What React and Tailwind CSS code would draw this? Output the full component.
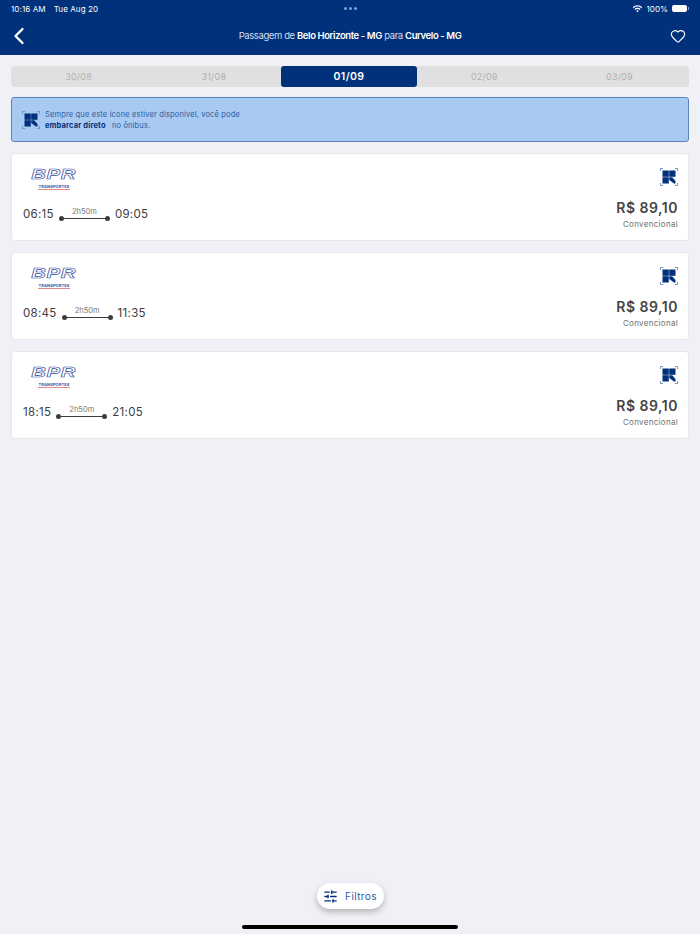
import React from 'react';
import { ChevronLeft, Heart, SlidersHorizontal } from 'lucide-react';

const dates = ['30/08', '31/08', '01/09', '02/09', '03/09'];

const trips = [
  { from: '06:15', to: '09:05' },
  { from: '08:45', to: '11:35' },
  { from: '18:15', to: '21:05' },
];

// icone de embarque direto
const BoardIcon = ({ className }) => (
  <svg viewBox="0 0 18 18" className={className}>
    <g fill="none" stroke="#6f94c8" strokeWidth="1">
      <path d="M.5 3V.5H3M15 .5h2.500V3M.5 15v2.500H3M15 17.500h2.500V15" />
    </g>
    <g fill="#00317a">
      <rect x="2.500" y="2.500" width="6.300" height="6.300" />
      <rect x="9.200" y="2.500" width="6.300" height="6.300" />
      <rect x="2.500" y="9.200" width="6.300" height="6.300" />
      <path d="M9.200 9.200h3l3.300 3.800v2.500h-1.500l-4.800-3.500z" />
    </g>
  </svg>
);

const Logo = () => (
  <div className="flex w-[46px] flex-col items-center">
    <span className="scale-x-[1.35] text-[15px] leading-[16px] font-bold italic tracking-[0.5px] text-transparent [-webkit-text-stroke:0.6px_#2f479c] font-['Liberation_Sans',sans-serif]">
      BPR
    </span>
    <span className="mt-[2px] border-b border-[#e08a86] text-[4px] leading-[5px] font-bold tracking-[0.1px] text-[#3f56a8]">
      TRANSPORTES
    </span>
  </div>
);

const TripCard = ({ from, to }) => (
  <div className="flex h-[88px] items-start justify-between rounded-[3px] border border-[#e6e7ea] bg-white pl-[11px] pr-[10px]">
    <div>
      <div className="mt-[12px] ml-[8px]">
        <Logo />
      </div>
      <div className="mt-[16px] flex items-center gap-[5px] text-[11.5px] leading-[16px] tracking-[0.3px] text-[#3c3c3c]">
        <span>{from}</span>
        <div className="flex flex-col">
          <span className="text-center text-[7.5px] leading-[9px] tracking-normal text-[#777]">2h50m</span>
          <div className="flex items-center">
            <div className="h-[5px] w-[5px] rounded-full bg-[#3c3c3c]"></div>
            <div className="h-px w-[41px] bg-[#3c3c3c]"></div>
            <div className="h-[5px] w-[5px] rounded-full bg-[#3c3c3c]"></div>
          </div>
        </div>
        <span>{to}</span>
      </div>
    </div>
    <div className="flex flex-col items-end">
      <BoardIcon className="mt-[14px] h-[18px] w-[18px]" />
      <span className="mt-[13px] text-[14px] leading-[18px] font-semibold tracking-[0.5px] text-[#444]">R$ 89,10</span>
      <span className="mt-[1px] text-[8px] leading-[12px] tracking-[0.3px] text-[#707070]">Convencional</span>
    </div>
  </div>
);

export default function App() {
  return (
    <div className="flex h-[934px] w-[700px] flex-col overflow-hidden bg-[#f0f1f6] font-['Inter',sans-serif]">
      {/* HEADER */}
      <header className="h-[55px] shrink-0 bg-[#00317a] text-white">
        <div className="flex h-[17px] items-center justify-between px-[11px] text-[8px] tracking-[0.1px]">
          <div className="flex w-[200px] gap-[8px]">
            <span>10:16 AM</span>
            <span>Tue Aug 20</span>
          </div>
          <div className="flex gap-[2px]">
            <div className="h-[3px] w-[3px] rounded-full bg-[#7fa3d8]"></div>
            <div className="h-[3px] w-[3px] rounded-full bg-[#7fa3d8]"></div>
            <div className="h-[3px] w-[3px] rounded-full bg-[#7fa3d8]"></div>
          </div>
          <div className="flex w-[200px] items-center justify-end gap-[3px]">
            <svg viewBox="0 0 16 12" className="h-[8px] w-[11px]" fill="white">
              <path d="M8 2.400c2.300 0 4.400.9 5.900 2.400l1.200-1.300C13.300 1.600 10.800.5 8 .5S2.700 1.600.9 3.500l1.200 1.300C3.600 3.300 5.700 2.400 8 2.400z" />
              <path d="M8 6c1.300 0 2.500.5 3.400 1.400l1.200-1.300C11.400 4.900 9.800 4.200 8 4.200s-3.400.7-4.600 1.900l1.200 1.300C5.500 6.500 6.700 6 8 6z" />
              <path d="M8 7.800c-.8 0-1.500.3-2 .8L8 11l2-2.400c-.5-.5-1.200-.8-2-.8z" />
            </svg>
            <span className="mr-[1px]">100%</span>
            <div className="flex items-center">
              <div className="h-[7px] w-[15px] rounded-[2px] bg-white"></div>
              <div className="ml-px h-[3px] w-px bg-[#7fa3d8]"></div>
            </div>
          </div>
        </div>
        <div className="flex h-[38px] items-center justify-between pl-[5px] pr-[14px]">
          <div className="w-[53px]">
            <ChevronLeft size={28} strokeWidth={2} className="text-white" />
          </div>
          <span className="text-[9.5px] tracking-[-0.4px] text-[#d5deee]">
            Passagem de <b className="font-semibold text-white">Belo Horizonte - MG</b> para{' '}
            <b className="font-semibold text-white">Curvelo - MG</b>
          </span>
          <div className="flex w-[44px] justify-end">
            <Heart size={16} strokeWidth={1.7} className="text-white" />
          </div>
        </div>
      </header>

      <main className="flex flex-col px-[11px] pt-[11px]">
        {/* DATAS */}
        <div className="flex h-[21px] rounded-[3px] bg-[#e0e0e0] pr-[2px]">
          {dates.map((d) =>
            d === '01/09' ? (
              <div
                key={d}
                className="flex flex-1 items-center justify-center rounded-[3px] bg-[#00317a] pt-[1px] text-[10.5px] font-semibold tracking-[0.4px] text-white"
              >
                {d}
              </div>
            ) : (
              <div key={d} className="flex flex-1 items-center justify-center text-[9px] tracking-[0.2px] text-[#b0b0b0]">
                {d}
              </div>
            )
          )}
        </div>

        {/* AVISO */}
        <div className="mt-[10px] flex h-[45px] items-center gap-[5px] rounded-[3px] border border-[#5d84b8] bg-[#a8caf2] pl-[10px]">
          <BoardIcon className="h-[18px] w-[18px]" />
          <p className="text-[7.5px] leading-[11px] tracking-[0.15px] text-[#2c5a9c]">
            Sempre que este ícone estiver disponível, você pode
            <br />
            <b className="mr-[4px] font-bold text-[#00317a]">embarcar direto</b> no ônibus.
          </p>
        </div>

        {/* VIAGENS */}
        <div className="mt-[11px] flex flex-col gap-[11px]">
          {trips.map((t) => (
            <TripCard key={t.from} from={t.from} to={t.to} />
          ))}
        </div>
      </main>

      <div className="flex-1"></div>

      {/* FILTROS */}
      <div className="flex flex-col items-center">
        <button className="flex h-[26px] w-[67px] items-center justify-center gap-[7px] rounded-full bg-white text-[10px] tracking-[0.4px] text-[#2c5a9c] shadow-[0_3px_6px_rgba(0,0,0,0.25)]">
          <SlidersHorizontal size={15} strokeWidth={2.2} className="text-[#00317a]" />
          Filtros
        </button>
        <div className="mt-[16px] mb-[5px] h-[4px] w-[216px] rounded-full bg-black"></div>
      </div>
    </div>
  );
}
